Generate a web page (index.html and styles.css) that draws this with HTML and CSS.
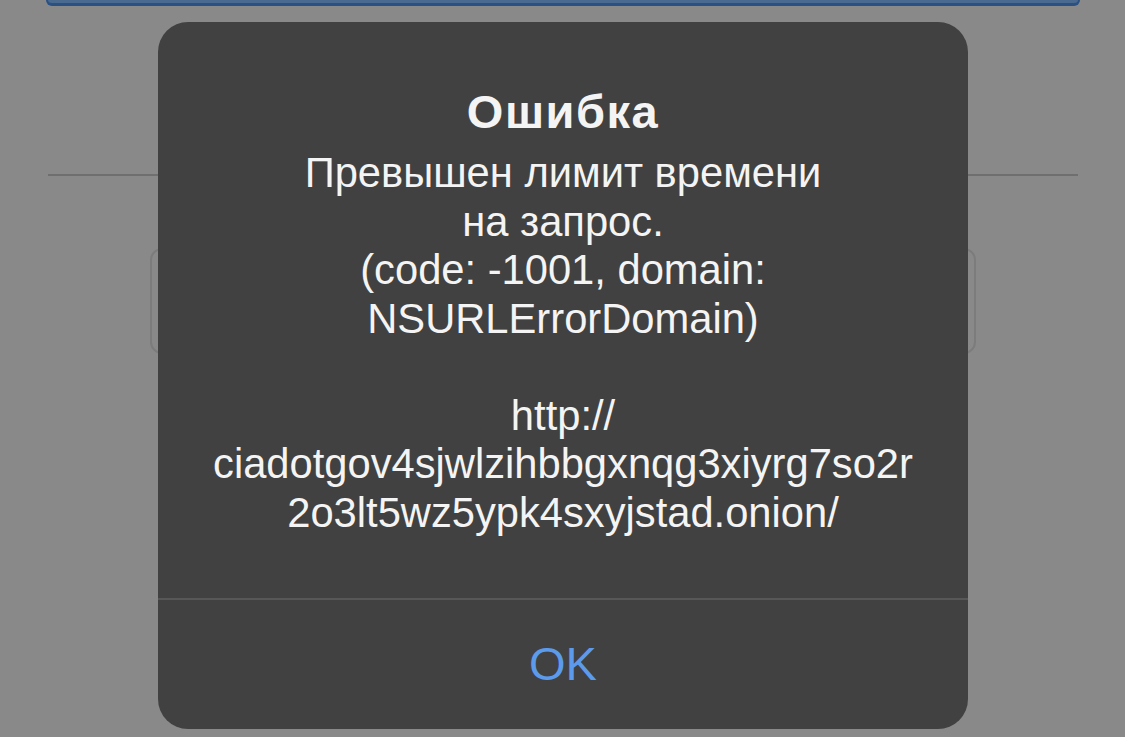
FILE: index.html
```html
<!DOCTYPE html>
<html lang="ru">
<head>
  <meta charset="UTF-8" />
  <title>Ошибка</title>
  <meta name="viewport" content="width=device-width, initial-scale=1.0" />
  <link rel="stylesheet" href="styles.css">
</head>

<body>

  <!-- страница под затемнением -->
  <div class="page">
    <div class="top-field"></div>
    <div class="divider"></div>
    <div class="input-box"></div>
  </div>

  <!-- алерт -->
  <div class="alert">
    <div class="alert-body">
      <div class="alert-title">Ошибка</div>
      <div class="alert-message">
        Превышен лимит времени<br>
        на запрос.<br>
        (code: -1001, domain:<br>
        NSURLErrorDomain)<br>
        <br>
        http://<br>
        ciadotgov4sjwlzihbbgxnqg3xiyrg7so2r<br>
        2o3lt5wz5ypk4sxyjstad.onion/
      </div>
    </div>
    <div class="alert-actions">
      <button class="alert-btn">OK</button>
    </div>
  </div>

</body>
</html>
```

FILE: styles.css
```css
* { margin: 0; padding: 0; box-sizing: border-box; }

body {
  width: 1125px;
  height: 737px;
  overflow: hidden;
  background-color: #898989;
  font-family: 'Liberation Sans', Arial, sans-serif;
  position: relative;
}

/* фон: поле ввода сверху, линия и рамка */
.page {
  display: flex;
  flex-direction: column;
  align-items: center;
}
.top-field {
  width: 1034px;
  height: 6px;
  border: 2px solid #2b5082;
  border-top: none;
  border-bottom-width: 3px;
  border-radius: 0 0 14px 14px;
  background-color: #4a6a90;
}
.divider {
  width: 1030px;
  height: 2px;
  background-color: #6f6f6f;
  margin-top: 168px;
}
.input-box {
  width: 826px;
  height: 106px;
  border: 2px solid #7c7c7c;
  border-radius: 12px;
  margin-top: 72px;
}

/* окно ошибки */
.alert {
  position: absolute;
  left: 158px;
  top: 22px;
  width: 810px;
  height: 707px;
  background-color: #414141;
  border-radius: 30px;
  display: flex;
  flex-direction: column;
  color: #f4f4f4;
  text-align: center;
  overflow: hidden;
}
.alert-body {
  flex: 1;
  padding-top: 63px;
}
.alert-title {
  font-size: 47px;
  font-weight: 700;
  letter-spacing: 1.5px;
  line-height: 54px;
  margin-bottom: 10px;
}
.alert-message {
  font-size: 41.7px;
  line-height: 48.5px;
}
.alert-actions {
  height: 131px;
  border-top: 2px solid #575757;
  display: flex;
  justify-content: center;
  align-items: center;
}
.alert-btn {
  background: transparent;
  border: none;
  color: #5c9bec;
  font-family: inherit;
  font-size: 47px;
  padding-bottom: 2px;
}
```
